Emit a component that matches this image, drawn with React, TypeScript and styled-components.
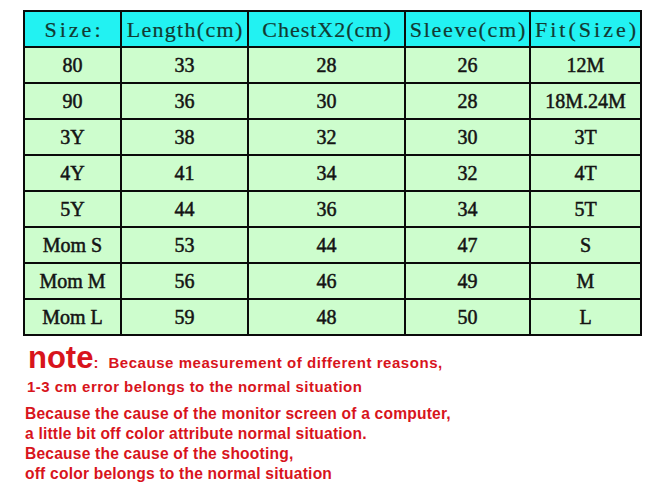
import React from "react";
import styled, { createGlobalStyle } from "styled-components";

const Global = createGlobalStyle`
  html, body { margin: 0; padding: 0; background: #ffffff; }
  body { width: 664px; height: 486px; overflow: hidden; }
`;

const Page = styled.div`
  padding: 10px 0 0 23px;
  width: 664px;
  height: 486px;
  box-sizing: border-box;
`;

const Grid = styled.div`
  display: grid;
  width: 619px;
  box-sizing: border-box;
  grid-template-columns: 95px 125px 155px 123px 109px;
  grid-auto-rows: 34px;
  gap: 2px;
  padding: 2px;
  background: #0a0a0a;
`;

const HeadCell = styled.div<{ $ls: number }>`
  display: flex;
  align-items: center;
  justify-content: center;
  background: #22f2f2;
  color: #123a32;
  font-family: "Liberation Serif", serif;
  font-size: 22px;
  letter-spacing: ${(p) => p.$ls}px;
  padding-left: ${(p) => p.$ls}px;
  padding-top: 1px;
  white-space: nowrap;
  -webkit-text-stroke: 0.2px #123a32;
`;

const Cell = styled.div`
  display: flex;
  align-items: center;
  justify-content: center;
  background: #cdfdcd;
  color: #141414;
  font-family: "Liberation Serif", serif;
  font-size: 20px;
  font-weight: 400;
  -webkit-text-stroke: 0.5px #141414;
  padding-top: 1px;
  white-space: pre;
`;

const Notes = styled.div`
  margin-top: 6px;
  color: #d8141c;
  font-family: "Liberation Sans", Arial, sans-serif;
  font-weight: 700;
`;

const FirstLine = styled.div`
  display: flex;
  align-items: baseline;
  padding-left: 5px;
  height: 32px;
`;

const NoteWord = styled.span`
  font-size: 31px;
  line-height: 32px;
`;

const SmallText = styled.span`
  font-size: 15px;
  letter-spacing: 0.55px;
  line-height: 18px;
  white-space: pre;
`;

const SecondLine = styled.div`
  margin-top: 4px;
  padding-left: 4px;
  font-size: 15px;
  letter-spacing: 0.48px;
  line-height: 18px;
`;

const Block = styled.div`
  margin-top: 8px;
  padding-left: 2px;
  font-size: 15.6px;
  letter-spacing: 0.2px;
  line-height: 20px;
`;

const columns = [
  { label: "Size:", ls: 3 },
  { label: "Length(cm)", ls: 1.3 },
  { label: "ChestX2(cm)", ls: 1 },
  { label: "Sleeve(cm)", ls: 1.7 },
  { label: "Fit(Size)", ls: 3 },
];

const rows = [
  ["80", "33", "28", "26", "12M"],
  ["90", "36", "30", "28", "18M.24M"],
  ["3Y", "38", "32", "30", "3T"],
  ["4Y", "41", "34", "32", "4T"],
  ["5Y", "44", "36", "34", "5T"],
  ["Mom S", "53", "44", "47", "S"],
  ["Mom M", "56", "46", "49", "M"],
  ["Mom L", "59", "48", "50", "L"],
];

export default function App() {
  return (
    <Page>
      <Global />
      <Grid>
        {columns.map((c) => (
          <HeadCell key={c.label} $ls={c.ls}>
            {c.label}
          </HeadCell>
        ))}
        {rows.map((r, i) =>
          r.map((v, j) => <Cell key={`${i}-${j}`}>{v}</Cell>)
        )}
      </Grid>
      <Notes>
        <FirstLine>
          <NoteWord>note</NoteWord>
          <SmallText>:  Because measurement of different reasons,</SmallText>
        </FirstLine>
        <SecondLine>1-3 cm error belongs to the normal situation</SecondLine>
        <Block>
          Because the cause of the monitor screen of a computer,
          <br />
          a little bit off color attribute normal situation.
          <br />
          Because the cause of the shooting,
          <br />
          off color belongs to the normal situation
        </Block>
      </Notes>
    </Page>
  );
}
